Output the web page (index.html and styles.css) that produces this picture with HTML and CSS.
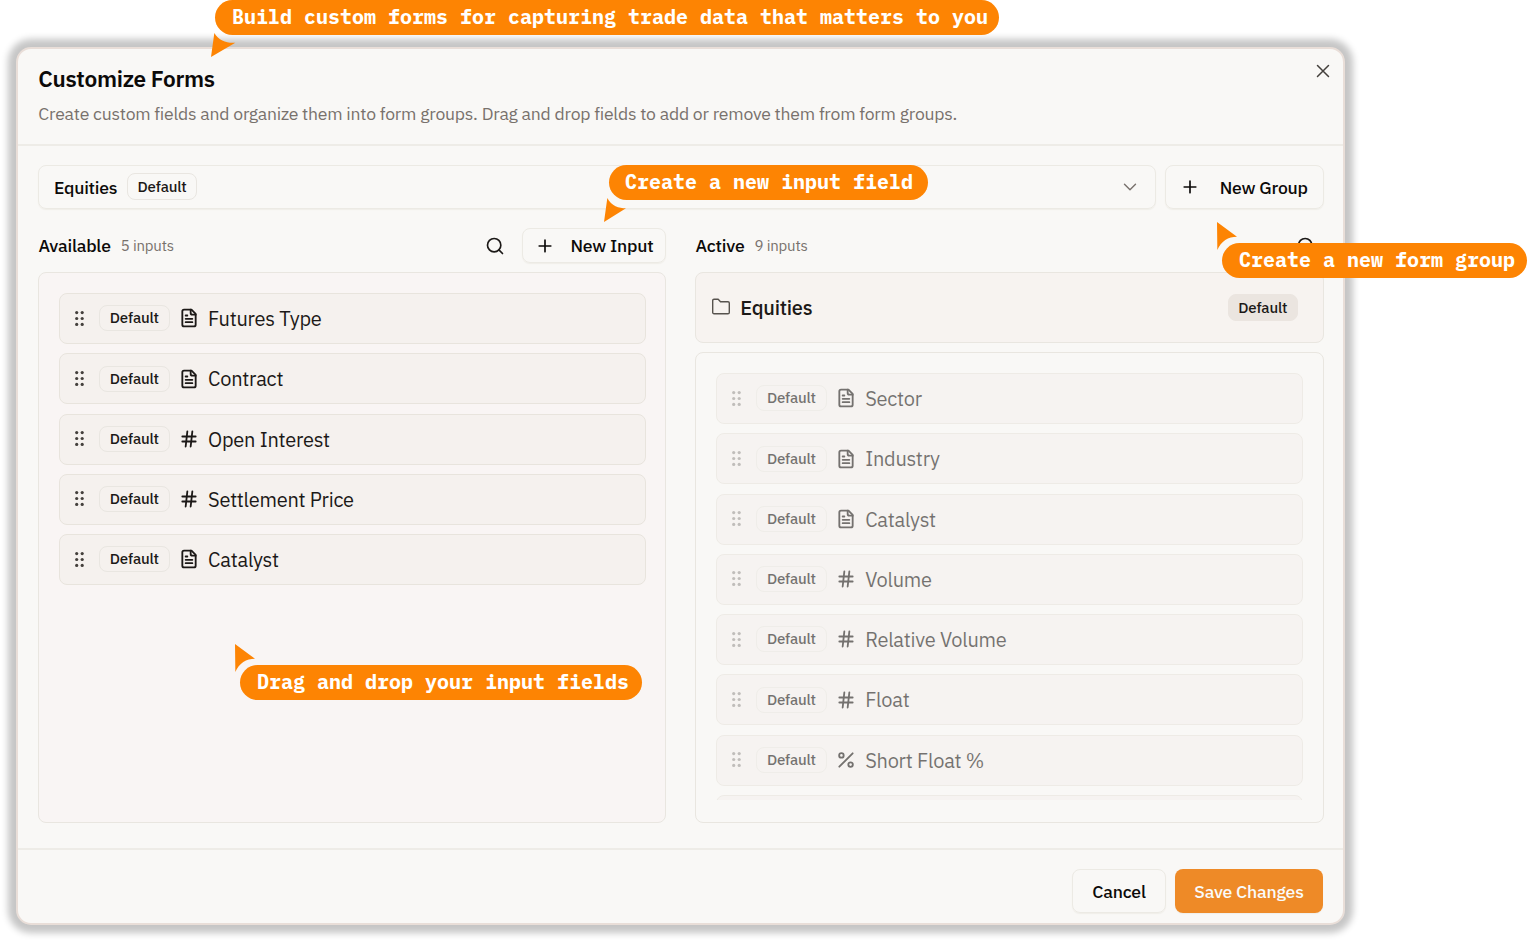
FILE: index.html
```
<!DOCTYPE html>
<html lang="en">
<head>
    <meta charset="UTF-8">
    <title>Customize Forms</title>
    <link rel="stylesheet" href="styles.css">
</head>
<body>
<svg class="sprite">
    <symbol id="plus" viewBox="0 0 24 24"><path d="M5 12h14M12 5v14"/></symbol>
    <symbol id="search" viewBox="0 0 24 24"><circle cx="11" cy="11" r="8"/><path d="m21 21-4.3-4.3"/></symbol>
    <symbol id="close" viewBox="0 0 14 14"><path d="M1.5 1.5l11 11M12.5 1.5l-11 11"/></symbol>
    <symbol id="chevron" viewBox="0 0 14 14"><path d="M1.5 4.2 7 9.8l5.5-5.6"/></symbol>
    <symbol id="folder" viewBox="0 0 20 20"><path d="M1.7 3.5A1.3 1.3 0 0 1 3 2.2h4.200l2.300 2.500H17A1.300 1.300 0 0 1 18.300 6v9.400a1.300 1.300 0 0 1-1.300 1.300H3a1.300 1.300 0 0 1-1.300-1.300z"/></symbol>
    <symbol id="grip" viewBox="0 0 9 15"><circle cx="1.700" cy="1.600" r="1.600"/><circle cx="7.200" cy="1.600" r="1.600"/><circle cx="1.700" cy="7.500" r="1.600"/><circle cx="7.200" cy="7.500" r="1.600"/><circle cx="1.700" cy="13.400" r="1.600"/><circle cx="7.200" cy="13.400" r="1.600"/></symbol>
    <symbol id="file" viewBox="0 0 24 24"><path d="M15 2H6a2 2 0 0 0-2 2v16a2 2 0 0 0 2 2h12a2 2 0 0 0 2-2V7Z"/><path d="M14 2v4a2 2 0 0 0 2 2h4M10 9H8M16 13H8M16 17H8"/></symbol>
    <symbol id="hash" viewBox="0 0 24 24"><path d="M4 9h16M4 15h16M10 3 8 21M16 3l-2 18"/></symbol>
    <symbol id="percent" viewBox="0 0 24 24"><path d="M20 4 4 20"/><circle cx="6.500" cy="6.500" r="2.700"/><circle cx="17.500" cy="17.500" r="2.700"/></symbol>
</svg>

<div class="modal">
    <div class="header">
        <div>
            <h1>Customize Forms</h1>
            <p>Create custom fields and organize them into form groups. Drag and drop fields to add or remove them from form groups.</p>
        </div>
        <svg class="close"><use href="#close"/></svg>
    </div>

    <div class="content">
        <div class="toolbar">
            <div class="select">
                <span class="label">Equities</span>
                <span class="badge">Default</span>
                <svg class="chevron"><use href="#chevron"/></svg>
            </div>
            <div class="button new-group"><svg class="icon"><use href="#plus"/></svg><span>New Group</span></div>
        </div>

        <div class="columns">
            <div class="column">
                <div class="column-head">
                    <span class="label">Available</span>
                    <span class="count">5 inputs</span>
                    <svg class="icon search"><use href="#search"/></svg>
                    <div class="button new-input"><svg class="icon"><use href="#plus"/></svg><span>New Input</span></div>
                </div>
                <div class="panel available">
                    <div class="list">
                        <div class="item"><svg class="grip"><use href="#grip"/></svg><span class="badge">Default</span><svg class="icon"><use href="#file"/></svg><span class="name">Futures Type</span></div>
                        <div class="item"><svg class="grip"><use href="#grip"/></svg><span class="badge">Default</span><svg class="icon"><use href="#file"/></svg><span class="name">Contract</span></div>
                        <div class="item"><svg class="grip"><use href="#grip"/></svg><span class="badge">Default</span><svg class="icon"><use href="#hash"/></svg><span class="name">Open Interest</span></div>
                        <div class="item"><svg class="grip"><use href="#grip"/></svg><span class="badge">Default</span><svg class="icon"><use href="#hash"/></svg><span class="name">Settlement Price</span></div>
                        <div class="item"><svg class="grip"><use href="#grip"/></svg><span class="badge">Default</span><svg class="icon"><use href="#file"/></svg><span class="name">Catalyst</span></div>
                    </div>
                </div>
            </div>

            <div class="column">
                <div class="column-head">
                    <span class="label">Active</span>
                    <span class="count">9 inputs</span>
                    <svg class="icon search last"><use href="#search"/></svg>
                </div>
                <div class="group">
                    <svg class="folder"><use href="#folder"/></svg>
                    <span class="group-name">Equities</span>
                    <span class="badge filled">Default</span>
                </div>
                <div class="panel active">
                    <div class="list">
                        <div class="item"><svg class="grip"><use href="#grip"/></svg><span class="badge">Default</span><svg class="icon"><use href="#file"/></svg><span class="name">Sector</span></div>
                        <div class="item"><svg class="grip"><use href="#grip"/></svg><span class="badge">Default</span><svg class="icon"><use href="#file"/></svg><span class="name">Industry</span></div>
                        <div class="item"><svg class="grip"><use href="#grip"/></svg><span class="badge">Default</span><svg class="icon"><use href="#file"/></svg><span class="name">Catalyst</span></div>
                        <div class="item"><svg class="grip"><use href="#grip"/></svg><span class="badge">Default</span><svg class="icon"><use href="#hash"/></svg><span class="name">Volume</span></div>
                        <div class="item"><svg class="grip"><use href="#grip"/></svg><span class="badge">Default</span><svg class="icon"><use href="#hash"/></svg><span class="name">Relative Volume</span></div>
                        <div class="item"><svg class="grip"><use href="#grip"/></svg><span class="badge">Default</span><svg class="icon"><use href="#hash"/></svg><span class="name">Float</span></div>
                        <div class="item"><svg class="grip"><use href="#grip"/></svg><span class="badge">Default</span><svg class="icon"><use href="#percent"/></svg><span class="name">Short Float %</span></div>
                        <div class="item"></div>
                    </div>
                </div>
            </div>
        </div>
    </div>

    <div class="footer">
        <div class="button cancel"><span>Cancel</span></div>
        <div class="button save"><span>Save Changes</span></div>
    </div>
</div>

<!-- callouts over the dialog -->
<div class="callout callout-build">Build custom forms for capturing trade data that matters to you</div>
<svg class="pointer pointer-build" viewBox="0 0 73 72"><path d="M10 0 0 72 73 29C48 31 24 24 10 0z"/></svg>
<div class="callout callout-input">Create a new input field</div>
<svg class="pointer pointer-input" viewBox="0 0 73 72"><path d="M10 0 0 72 66 31C45 31 22 24 10 0z"/></svg>
<div class="callout callout-group">Create a new form group</div>
<svg class="pointer pointer-group" viewBox="0 0 60 84"><path d="M0 0 60 44C34 44 12 57 1 84z"/></svg>
<div class="callout callout-drag">Drag and drop your input fields</div>
<svg class="pointer pointer-drag" viewBox="0 0 60 84"><path d="M0 0 60 44C34 44 12 57 1 84z"/></svg>
</body>
</html>
```
FILE: styles.css
```
* {
    box-sizing: border-box;
    letter-spacing: -0.012em;
}
body {
    margin: 0;
    height: 942px;
    overflow: hidden;
    position: relative;
    background-color: #fff;
    color: #1c1917;
    font-family: "IBM Plex Sans", Roboto, sans-serif;
    font-size: 17.6px;
    display: flex;
    align-items: flex-start;
}
h1, p {
    margin: 0;
}
svg {
    display: block;
    flex-shrink: 0;
    fill: none;
    stroke: currentColor;
    stroke-width: 2;
    stroke-linecap: round;
    stroke-linejoin: round;
}
.sprite {
    position: absolute;
    width: 0;
    height: 0;
}
.modal {
    width: 1329px;
    height: 878px;
    margin: 47px 0 0 16px;
    display: flex;
    flex-direction: column;
    background-color: #f9f8f6;
    border: 2px solid #e9ded8;
    border-radius: 15px;
    box-shadow: 0 0 7px 8px #c6c6c6;
}
.header {
    height: 97px;
    padding: 16px 13px 0 20.3px;
    display: flex;
    justify-content: space-between;
    border-bottom: 2px solid #eeece7;
}
h1 {
    font-size: 22.6px;
    font-weight: 600;
    line-height: 28px;
    color: #0c0a09;
}
p {
    margin-top: 9px;
    line-height: 24px;
    color: #78716c;
}
.close {
    width: 14px;
    height: 14px;
    margin-top: -1px;
    stroke: #44403c;
    stroke-width: 1.5;
}
.content {
    flex: 1;
    padding: 19px 19.5px 0 20.4px;
}
.toolbar {
    display: flex;
    gap: 9px;
}
.select {
    flex: 1;
    height: 44px;
    padding: 0 17.5px 0 14.5px;
    display: flex;
    align-items: center;
    border: 1px solid #eceae4;
    border-radius: 8px;
    box-shadow: 0 1px 1px #f0eee9;
}
.label {
    font-weight: 500;
    color: #0c0a09;
}
.badge {
    width: 70.5px;
    height: 27px;
    border: 1px solid #e9e6e1;
    border-radius: 8px;
    font-size: 15px;
    font-weight: 500;
    line-height: 25px;
    text-align: center;
    flex-shrink: 0;
}
.select .badge {
    margin-left: 9.5px;
    margin-top: -1px;
}
.chevron {
    width: 14px;
    height: 14px;
    margin-left: auto;
    stroke: #78716c;
    stroke-width: 1.4;
}
.icon {
    width: 20px;
    height: 20px;
}
.button {
    height: 44px;
    display: flex;
    align-items: center;
    justify-content: center;
    border: 1px solid #eceae4;
    border-radius: 8px;
    box-shadow: 0 1px 1px #f0eee9;
    font-weight: 500;
    color: #0c0a09;
}
.new-group {
    width: 159px;
    gap: 19.5px;
}
.columns {
    margin-top: 19px;
    display: flex;
    gap: 29px;
}
.column {
    flex: 1;
}
.column-head {
    height: 35px;
    margin-bottom: 9px;
    display: flex;
    align-items: center;
}
.count {
    margin-left: 10px;
    font-size: 15px;
    color: #78716c;
}
.search {
    margin-left: auto;
    margin-right: 17px;
}
.search.last {
    margin-right: 7.5px;
}
.new-input {
    width: 144px;
    height: 35px;
    gap: 15px;
}
.panel {
    padding: 20px 19.4px;
    border: 1px solid #e9e6e0;
    border-radius: 8px;
}
.available {
    height: 551px;
    background-color: #f9f5f4;
}
.active {
    height: 471px;
    margin-top: 9px;
    padding-bottom: 22px;
    background-color: #f9f8f6;
}
.list {
    height: 100%;
    overflow: hidden;
    display: flex;
    flex-direction: column;
    gap: 9.3px;
}
.item {
    height: 51px;
    flex-shrink: 0;
    padding-left: 15.3px;
    display: flex;
    align-items: center;
    background-color: #f5f1ee;
    border: 1px solid #e8e4dd;
    border-radius: 8px;
}
.active .item {
    opacity: 0.6;
}
.grip {
    width: 9px;
    height: 15px;
    margin: -1px 15px 0 0;
    fill: #44403c;
    stroke: none;
}
.active .grip {
    opacity: 0.5;
}
.item .badge {
    height: 26px;
    margin-top: -0.6px;
    line-height: 24px;
}
.item .icon {
    margin: -0.6px 9.5px 0 9px;
    stroke-width: 2.2;
}
.name {
    font-size: 20px;
}
.group {
    height: 71px;
    padding: 0 24.5px 0 14.3px;
    display: flex;
    align-items: center;
    background-color: #f7f3f0;
    border: 1px solid #e9e6e0;
    border-radius: 8px;
}
.folder {
    width: 20px;
    height: 20px;
    margin: -1px 9.5px 0 0;
    stroke: #57534e;
    stroke-width: 1.4;
}
.group-name {
    flex: 1;
    font-size: 20px;
    font-weight: 500;
}
.filled {
    background-color: #ebe5e0;
    border-color: #ebe5e0;
}
.footer {
    height: 75px;
    padding: 18px 20px 0 0;
    display: flex;
    justify-content: flex-end;
    gap: 9px;
    border-top: 2px solid #eeece7;
}
.cancel {
    width: 94px;
}
.save {
    width: 148px;
    background-color: #ee8a27;
    border: none;
    color: #fafaf9;
}
.footer .button {
    margin-top: 1px;
}
.callout {
    position: absolute;
    height: 35px;
    padding-left: 16.5px;
    border-radius: 18px;
    background-color: #fd8403;
    color: #fff;
    font: bold 20px/34px "IBM Plex Mono", "Liberation Mono", monospace;
    letter-spacing: 0;
    white-space: nowrap;
}
.callout-build {
    left: 215.4px;
    top: 0;
    width: 784px;
}
.callout-input {
    left: 608.5px;
    top: 165px;
    width: 319px;
}
.callout-group {
    left: 1222.4px;
    top: 243px;
    width: 305px;
}
.callout-drag {
    left: 240.4px;
    top: 665px;
    width: 402px;
}
.pointer {
    position: absolute;
    width: 24.3px;
    height: 24px;
    fill: #fd8403;
    stroke: none;
}
.pointer-build {
    left: 211.4px;
    top: 33px;
}
.pointer-input {
    left: 604.4px;
    top: 198px;
}
.pointer-group {
    left: 1217.4px;
    top: 222px;
    width: 20px;
    height: 28px;
}
.pointer-drag {
    left: 235.4px;
    top: 644px;
    width: 20px;
    height: 28px;
}
```
